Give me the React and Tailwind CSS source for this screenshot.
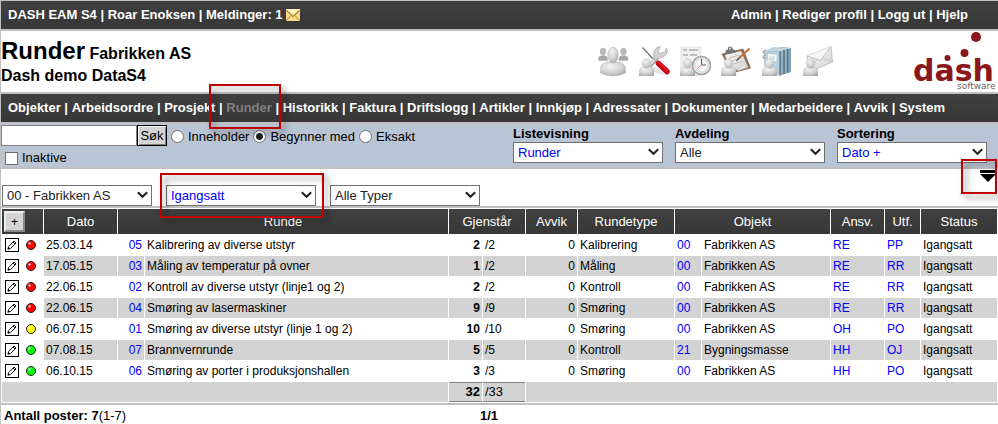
import { Fragment, useState } from "react";

const NAV_ITEMS = [
  "Objekter", "Arbeidsordre", "Prosjekt", "Runder", "Historikk", "Faktura", "Driftslogg",
  "Artikler", "Innkjøp", "Adressater", "Dokumenter", "Medarbeidere", "Avvik", "System",
];

const ROUNDS = [
  { color: "#ff0000", date: "25.03.14", no: "05", name: "Kalibrering av diverse utstyr", left: 2, total: 2, type: "Kalibrering", objNo: "00", obj: "Fabrikken AS", resp: "RE", exec: "PP" },
  { color: "#ff0000", date: "17.05.15", no: "03", name: "Måling av temperatur på ovner", left: 1, total: 2, type: "Måling", objNo: "00", obj: "Fabrikken AS", resp: "RE", exec: "RR" },
  { color: "#ff0000", date: "22.06.15", no: "02", name: "Kontroll av diverse utstyr (linje1 og 2)", left: 2, total: 2, type: "Kontroll", objNo: "00", obj: "Fabrikken AS", resp: "RE", exec: "RR" },
  { color: "#ff0000", date: "22.06.15", no: "04", name: "Smøring av lasermaskiner", left: 9, total: 9, type: "Smøring", objNo: "00", obj: "Fabrikken AS", resp: "RE", exec: "RR" },
  { color: "#ffff00", date: "06.07.15", no: "01", name: "Smøring av diverse utstyr (linje 1 og 2)", left: 10, total: 10, type: "Smøring", objNo: "00", obj: "Fabrikken AS", resp: "OH", exec: "PO" },
  { color: "#00ff00", date: "07.08.15", no: "07", name: "Brannvernrunde", left: 5, total: 5, type: "Kontroll", objNo: "21", obj: "Bygningsmasse", resp: "HH", exec: "OJ" },
  { color: "#00ff00", date: "06.10.15", no: "06", name: "Smøring av porter i produksjonshallen", left: 3, total: 3, type: "Smøring", objNo: "00", obj: "Fabrikken AS", resp: "HH", exec: "PO" },
];

// red frame that points out a control, laid over its parent
function Callout({ className }) {
  return (
    <span
      className={`pointer-events-none absolute z-10 border-2 border-[#c00000] drop-shadow-[4px_4px_3px_rgba(0,0,0,0.45)] ${className}`}
    />
  );
}

function Select({ id, label, options, blue, hideLabel }) {
  return (
    <div className="w-[150px]">
      {!hideLabel && (
        <label htmlFor={id} className="block text-[13px] leading-4 font-bold">
          {label}
        </label>
      )}
      <div className="relative">
        <select
          id={id}
          aria-label={label}
          className={`block h-[21px] w-full appearance-none border border-[#707070] bg-white pl-1 text-[13px] leading-4 ${blue ? "text-[#0000ff]" : "text-[#222]"}`}
        >
          {options.map((option) => (
            <option key={option}>{option}</option>
          ))}
        </select>
        <svg className="pointer-events-none absolute top-1.5 right-1" width="11" height="8" viewBox="0 0 11 8">
          <path d="M0.8 1.2 L5.5 5.8 L10.2 1.2" fill="none" stroke="#222" strokeWidth="2" />
        </svg>
      </div>
    </div>
  );
}

function Radio({ value, mode, onChange }) {
  return (
    <label className="flex items-center gap-1">
      <input
        type="radio"
        name="match"
        value={value}
        checked={mode === value}
        onChange={() => onChange(value)}
        className="size-[13px] appearance-none rounded-full border border-[#707070] bg-white checked:bg-[radial-gradient(circle,#222_3px,#fff_4px)]"
      />
      {value}
    </label>
  );
}

// small grey figure in front of the toolbar icons
function Figure() {
  return (
    <g>
      <path d="M0 30 V25 Q0 21 4.500 20.500 H10 Q15 21 15 25 V30 Z" fill="url(#person)" />
      <ellipse cx="7.500" cy="17.500" rx="4.300" ry="4.800" fill="url(#person)" stroke="#c4c4c4" strokeWidth="0.400" />
    </g>
  );
}

function ToolIcon({ label, children }) {
  return (
    <a href="#" aria-label={label}>
      <svg width="31" height="31" viewBox="0 0 31 31">{children}</svg>
    </a>
  );
}

function Toolbar() {
  return (
    <div className="flex gap-2.5">
      <ToolIcon label="Medarbeidere">
        <defs>
          <radialGradient id="person" cx="0.4" cy="0.3" r="0.8">
            <stop offset="0" stopColor="#f4f4f4" />
            <stop offset="0.6" stopColor="#d0d0d0" />
            <stop offset="1" stopColor="#a2a2a2" />
          </radialGradient>
          <linearGradient id="paper" x1="0" y1="0" x2="1" y2="1">
            <stop offset="0" stopColor="#fafafa" />
            <stop offset="1" stopColor="#cfcfcf" />
          </linearGradient>
        </defs>
        <g stroke="#a5a5a5" strokeWidth="0.4">
          <path d="M0.500 14.500 V12 Q1 9.500 5 9.500 Q9 9.500 9.500 12 V14.500 Z" fill="#a8a8a8" />
          <ellipse cx="5" cy="5.500" rx="2.800" ry="3.600" fill="#b9b9b9" />
          <path d="M21 14.500 V12 Q21.500 9.500 25.500 9.500 Q29.500 9.500 30 12 V14.500 Z" fill="#a8a8a8" />
          <ellipse cx="25.500" cy="5.500" rx="2.800" ry="3.600" fill="#b9b9b9" />
          <path d="M2.500 27 V22 Q3.500 16.500 10 16 H20 Q26.500 16.500 27.500 22 V27 Q15 33 2.500 27 Z" fill="url(#person)" />
          <ellipse cx="15" cy="9" rx="5.200" ry="8" fill="url(#person)" />
        </g>
      </ToolIcon>
      <ToolIcon label="Arbeidsordre">
        <path d="M9 25 L26 29 L30 28 L15 20 Z" fill="#e2e2e2" />
        <path d="M3.500 1.500 L16 15" stroke="#777" strokeWidth="1.300" />
        <path d="M7 24 L18 12" stroke="#a9a9a9" strokeWidth="4.500" />
        <path d="M7 23 L18 11" stroke="#dedede" strokeWidth="2.500" />
        <path d="M15 11 Q13 4 19 1 L21.500 0.500 L19 5 L21 8 L26 5.500 L27.500 2 Q30 7 25.500 10 Q22 13 18 12.500 L16 15 Z" fill="#d2d2d2" stroke="#9e9e9e" strokeWidth="0.600" />
        <path d="M19.500 17.500 L28 25.500" stroke="#c80010" strokeWidth="5.500" strokeLinecap="round" />
        <path d="M19.500 16 L28.500 24.500" stroke="#e6202a" strokeWidth="1.500" strokeLinecap="round" />
        <Figure />
      </ToolIcon>
      <ToolIcon label="Timer">
        <path d="M1 1 H21 V29 H1 Z" fill="#f0f0f0" stroke="#d2d2d2" strokeWidth="0.500" />
        <path d="M3 4 H7 M9 4 H18 M3 9 H8 M10 9 H17" stroke="#ababab" strokeWidth="1.500" />
        <Figure />
        <circle cx="21.500" cy="19.500" r="9" fill="#eaeaea" stroke="#a2a2a2" strokeWidth="1.500" />
        <circle cx="21.500" cy="19.500" r="6.500" fill="#f8f8f8" stroke="#c5c5c5" strokeWidth="0.600" />
        <path d="M21.500 13 V19 M21.500 19 H26" stroke="#555" strokeWidth="1" />
        <path d="M22 18.500 L17 23" stroke="#ff6060" strokeWidth="1" />
      </ToolIcon>
      <ToolIcon label="Rapporter">
        <path d="M1 8 L22 3 L29.500 22 L11 27 Z" fill="#936f56" stroke="#735544" strokeWidth="0.600" />
        <path d="M4 9 L20 5 L27 21 L16 24 L8 21 Z" fill="url(#paper)" />
        <path d="M16 25 L23 19 L27 21 Z" fill="#eee" stroke="#bbb" strokeWidth="0.400" />
        <path d="M8 12 L18 9 M10 15 L20 12 M13 18 L22 15" stroke="#b5b5b5" strokeWidth="0.800" />
        <path d="M4 8.500 L5 4 L7 3.500 Q6.500 0.500 9 0.500 Q11.500 0.500 11.500 3 L14 4 L14.500 6.500 Z" fill="#767676" />
        <circle cx="9" cy="2.500" r="1" fill="#ddd" />
        <path d="M28.500 2.500 L17 13" stroke="#bf7841" strokeWidth="2.200" />
        <path d="M18 12 L15.500 14.800" stroke="#494949" strokeWidth="1.100" />
        <Figure />
      </ToolIcon>
      <ToolIcon label="Dokumenter">
        <path d="M2 5 L20 1 L29 2 V26 L18 29.500 L3 25 Z" fill="#7fa2b6" />
        <path d="M2 5 L18 5.500 V29.500 L3 27 Z" fill="#b6d0df" />
        <path d="M2 5 L11 1 L29 2 L18 5.500 Z" fill="#c2d3dd" />
        <path d="M18 5.500 V29.500 M22 4 V28 M25.500 3 V27" stroke="#527183" strokeWidth="1.300" />
        <path d="M20 5 V28.500 M24 4 V27" stroke="#a5c2d2" strokeWidth="1" />
        <path d="M6 8 L14.500 8.500 V15 H6 Z" fill="#f3f7f9" />
        <path d="M7.500 11 H13 M7.500 13 H13" stroke="#a9bcc6" strokeWidth="0.700" />
        <path d="M3.500 4 Q0 5 1 7 H3 M3.500 9 Q0 10 1 12 H3" fill="none" stroke="#8a8a8a" strokeWidth="0.900" />
        <Figure />
      </ToolIcon>
      <ToolIcon label="Meldinger">
        <path d="M4 10 L28 0.500 L29.500 16 L5 26.500 Z" fill="url(#paper)" stroke="#adadad" strokeWidth="0.700" />
        <path d="M4 10 L17.500 14.500 L28 0.500" fill="#f5f5f5" stroke="#adadad" strokeWidth="0.700" />
        <path d="M5 26.500 L14 13.500 M29.500 16 L19.500 12" stroke="#bababa" strokeWidth="0.600" />
        <Figure />
      </ToolIcon>
    </div>
  );
}

function Logo() {
  return (
    <svg width="85" height="60" viewBox="0 0 85 60" role="img" aria-label="dash software">
      <g fill="#8b171b">
        <circle cx="63" cy="6" r="5" />
        <circle cx="51.500" cy="22" r="4" />
        <circle cx="34.500" cy="27" r="3" />
        <text x="0" y="50" fontSize="30" fontWeight="bold" fontFamily="DejaVu Sans, sans-serif">dash</text>
      </g>
      <text x="44" y="58" fontSize="9" fill="#666" fontFamily="DejaVu Sans, sans-serif">software</text>
    </svg>
  );
}

function PencilBox() {
  return (
    <svg width="14" height="14" viewBox="0 0 14 14" className="block">
      <rect x="0.500" y="0.500" width="13" height="13" fill="#fff" stroke="#000" />
      <path d="M3 11.200 L3.500 8.600 L9 3 L11 5 L5.500 10.500 Z M8 4 L10 6" fill="#fff" stroke="#000" strokeWidth="0.900" />
      <path d="M2.500 11.500 L5 10.500 L3.500 9 Z" fill="#000" />
    </svg>
  );
}

function StatusDot({ color }) {
  return (
    <svg width="10" height="10" viewBox="0 0 10 10" className="block">
      <circle cx="5" cy="5" r="4.500" fill={color} stroke="#222" strokeWidth="1" />
      <circle cx="3.600" cy="3.400" r="1.200" fill="#fff" fillOpacity="0.800" />
    </svg>
  );
}

function RoundsTable() {
  const left = ROUNDS.reduce((sum, r) => sum + r.left, 0);
  const total = ROUNDS.reduce((sum, r) => sum + r.total, 0);

  return (
    <table className="w-full table-fixed border-separate border-spacing-px text-xs">
      <colgroup>
        <col className="w-[41px]" />
        <col className="w-[73px]" />
        <col className="w-[26px]" />
        <col />
        <col className="w-[33px]" />
        <col className="w-[42px]" />
        <col className="w-[51px]" />
        <col className="w-[96px]" />
        <col className="w-[26px]" />
        <col className="w-[128px]" />
        <col className="w-[53px]" />
        <col className="w-[35px]" />
        <col className="w-[76px]" />
      </colgroup>
      <thead>
        <tr className="h-[25px] text-[13px] text-white *:bg-linear-to-b *:from-[#404040] *:to-[#373737] *:p-0 *:font-normal">
          <th className="text-left">
            <button type="button" aria-label="Ny runde" className="ml-0.5 block size-[21px] border-2 border-t-[#eee] border-r-[#888] border-b-[#888] border-l-[#eee] bg-[#d4d4d4] text-xs leading-4 text-black">
              +
            </button>
          </th>
          <th>Dato</th>
          <th colSpan={2}>Runde</th>
          <th colSpan={2}>Gjenstår</th>
          <th>Avvik</th>
          <th>Rundetype</th>
          <th colSpan={2}>Objekt</th>
          <th>Ansv.</th>
          <th>Utf.</th>
          <th>Status</th>
        </tr>
      </thead>
      <tbody>
        {ROUNDS.map((r) => (
          <tr key={r.no} className="h-5 *:px-0.5 *:py-0 *:leading-5 even:*:not-first:bg-[#d3d3d3]">
            <td>
              <div className="flex items-center gap-[7px] pl-px">
                <a href="#" aria-label={`Rediger ${r.name}`}><PencilBox /></a>
                <StatusDot color={r.color} />
              </div>
            </td>
            <td>{r.date}</td>
            <td className="text-right"><a href="#" className="text-[#0000ff]">{r.no}</a></td>
            <td>{r.name}</td>
            <td className="text-right font-bold">{r.left}</td>
            <td>/{r.total}</td>
            <td className="text-right">0</td>
            <td>{r.type}</td>
            <td><a href="#" className="text-[#0000ff]">{r.objNo}</a></td>
            <td>{r.obj}</td>
            <td><a href="#" className="text-[#0000ff]">{r.resp}</a></td>
            <td><a href="#" className="text-[#0000ff]">{r.exec}</a></td>
            <td>Igangsatt</td>
          </tr>
        ))}
      </tbody>
      <tfoot>
        <tr className="h-5 text-[13px] *:bg-[#d3d3d3] *:px-0.5 *:py-0 *:leading-4">
          <td colSpan={4} />
          <td className="border-y border-[#808080] text-right font-bold">{left}</td>
          <td className="border-y border-[#808080]">/{total}</td>
          <td colSpan={7} />
        </tr>
      </tfoot>
    </table>
  );
}

export default function App() {
  const [mode, setMode] = useState("Begynner med");

  return (
    <div className="overflow-hidden border-t border-l border-[#c0c0c0] bg-white font-['Liberation_Sans',Arial,sans-serif] text-[13px] leading-4 text-black">
      {/* Top bar */}
      <div className="flex h-7 items-center justify-between bg-linear-to-b from-[#404040] to-[#373737] pr-[30px] pl-[7px] font-bold text-white">
        <div className="flex items-center gap-[3px]">
          <span>DASH EAM S4 | Roar Enoksen | Meldinger: 1</span>
          <svg width="14" height="12" viewBox="0 0 14 12">
            <rect width="14" height="12" fill="#f6dc87" />
            <path d="M0 12 L5.500 6 M14 12 L8.500 6" stroke="#b48b35" strokeWidth="1" />
            <path d="M0 0 H14 V2 L7 8 L0 2 Z" fill="#fff2bc" />
            <path d="M0.500 1.500 L7 7.500 L13.500 1.500" fill="none" stroke="#a87f2d" strokeWidth="1.200" />
          </svg>
        </div>
        <div>
          <a href="#">Admin</a> | <a href="#">Rediger profil</a> | <a href="#">Logg ut</a> | <a href="#">Hjelp</a>
        </div>
      </div>

      {/* Title */}
      <header className="flex h-[65px] justify-between border-y-2 border-[#c0c0c0]">
        <div className="pt-1.5 font-bold">
          <h1 className="text-base leading-7">
            <span className="text-2xl leading-7">Runder</span> Fabrikken AS
          </h1>
          <p className="text-base leading-4">Dash demo DataS4</p>
        </div>
        <div className="flex gap-[79px]">
          <div className="pt-[15px]"><Toolbar /></div>
          <Logo />
        </div>
      </header>

      <nav className="flex h-7 items-center bg-linear-to-b from-[#404040] to-[#373737] pl-[7px] font-bold whitespace-pre text-white">
        {NAV_ITEMS.map((item, i) => (
          <Fragment key={item}>
            {i > 0 && " | "}
            {item === "Runder" ? (
              <span className="relative">
                <a href="#" aria-current="page" className="text-[#808080]">{item}</a>
                <Callout className="-top-4 -right-[9px] -bottom-[13px] -left-[17px]" />
              </span>
            ) : (
              <a href="#">{item}</a>
            )}
          </Fragment>
        ))}
      </nav>

      {/* Search */}
      <div className="flex justify-between border-y-2 border-[#c0c0c0] bg-[#b9c4d5] pb-px">
        <form onSubmit={(e) => e.preventDefault()}>
          <div className="flex items-center pt-px">
            <input type="text" aria-label="Søk" className="h-[21px] w-[136px] border border-[#808080] bg-white px-1" />
            <button type="submit" className="h-[21px] w-[30px] border border-black bg-[#d4d4d4] leading-4 shadow-[inset_1px_1px_#fff,inset_-1px_-1px_#808080]">
              Søk
            </button>
            <div className="flex gap-1 pt-0.5 pl-1">
              {["Inneholder", "Begynner med", "Eksakt"].map((value) => (
                <Radio key={value} value={value} mode={mode} onChange={setMode} />
              ))}
            </div>
          </div>
          <label className="flex items-center gap-1 pt-1 pl-1">
            <input type="checkbox" className="size-[13px] appearance-none border border-[#707070] bg-white checked:bg-[#222]" />
            Inaktive
          </label>
        </form>
        <div className="flex gap-3 pt-0.5 pr-[11px]">
          <Select id="list" label="Listevisning" options={["Runder"]} blue />
          <Select id="department" label="Avdeling" options={["Alle"]} />
          <Select id="sorting" label="Sortering" options={["Dato +"]} blue />
        </div>
      </div>

      {/* Filters */}
      <div className="flex h-[37px] items-start justify-between pl-px">
        <div className="flex gap-3.5 pt-4">
          <Select id="site" label="Anlegg" options={["00 - Fabrikken AS"]} hideLabel />
          <div className="relative">
            <Select id="status" label="Status" options={["Igangsatt"]} blue hideLabel />
            <Callout className="-top-3 -right-2 -bottom-3 -left-1.5" />
          </div>
          <Select id="type" label="Type" options={["Alle Typer"]} hideLabel />
        </div>
        <button type="button" aria-label="Vis filter" className="relative mr-0.5">
          <svg width="16" height="13" viewBox="0 0 16 13" className="block">
            <path d="M0 1 H16 V4 H0 Z M0 5 H16 L8 13 Z" fill="#000" />
          </svg>
          <Callout className="-top-2.5 -right-px -bottom-3 -left-[19px]" />
        </button>
      </div>

      <main className="border-y-2 border-[#c0c0c0]">
        <RoundsTable />
      </main>

      <footer className="grid grid-cols-[1fr_auto_1fr] pt-[3px] pr-6 pl-[3px]">
        <p><b>Antall poster: 7</b>(1-7)</p>
        <b>1/1</b>
      </footer>
    </div>
  );
}
